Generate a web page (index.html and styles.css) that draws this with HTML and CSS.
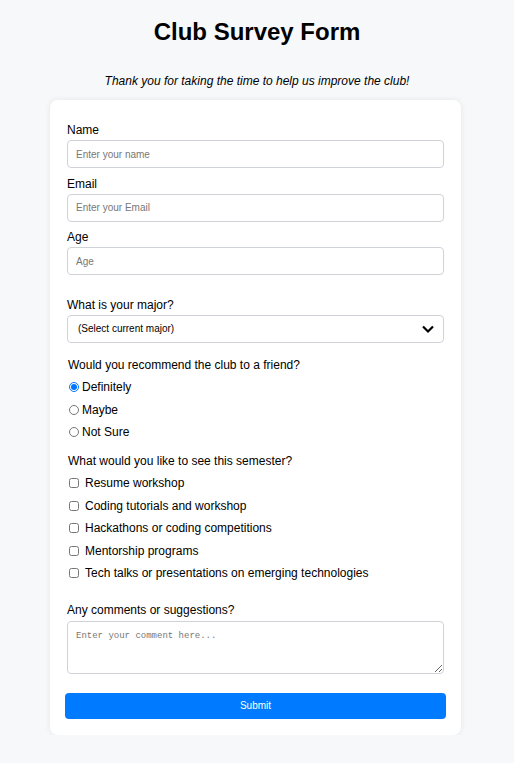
FILE: index.html
```html
<!DOCTYPE html>
<html>
<head>
<meta charset="utf-8">
<link rel="stylesheet" href="styles.css">
</head>
<body>
<h1 class="title">Club Survey Form</h1>
<p class="subtitle">Thank you for taking the time to help us improve the club!</p>
<form class="card">
  <label class="lbl" for="name">Name</label>
  <input class="field" id="name" type="text" placeholder="Enter your name">
  <label class="lbl" for="email">Email</label>
  <input class="field" id="email" type="email" placeholder="Enter your Email">
  <label class="lbl" for="age">Age</label>
  <input class="field" id="age" type="number" placeholder="Age">

  <label class="lbl lbl-major" for="major">What is your major?</label>
  <div class="select-wrap">
    <select class="field select" id="major">
      <option>(Select current major)</option>
    </select>
    <svg class="chev" width="14" height="10" viewBox="0 0 14 10"><path d="M2 2.5 L7 7.5 L12 2.5" fill="none" stroke="#000" stroke-width="2.2"/></svg>
  </div>

  <p class="q">Would you recommend the club to a friend?</p>
  <label class="opt"><input type="radio" name="rec" checked> Definitely</label>
  <label class="opt"><input type="radio" name="rec"> Maybe</label>
  <label class="opt"><input type="radio" name="rec"> Not Sure</label>

  <p class="q q2">What would you like to see this semester?</p>
  <label class="chk"><input type="checkbox"> Resume workshop</label>
  <label class="chk"><input type="checkbox"> Coding tutorials and workshop</label>
  <label class="chk"><input type="checkbox"> Hackathons or coding competitions</label>
  <label class="chk"><input type="checkbox"> Mentorship programs</label>
  <label class="chk"><input type="checkbox"> Tech talks or presentations on emerging technologies</label>

  <label class="lbl lbl-comments" for="comments">Any comments or suggestions?</label>
  <textarea class="field area" id="comments" placeholder="Enter your comment here..."></textarea>

  <button class="submit" type="button">Submit</button>
</form>
</body>
</html>
```
FILE: styles.css
```css
* { box-sizing: border-box; }
body {
  margin: 0;
  background: #f7f8fa;
  font-family: "Liberation Sans", Arial, sans-serif;
  color: #000;
}
.title {
  margin: 18px 0 0;
  text-align: center;
  font-size: 24px;
  font-weight: bold;
  line-height: 28px;
}
.subtitle {
  margin: 28px 0 0;
  text-align: center;
  font-style: italic;
  font-size: 12px;
  line-height: 14px;
}
.card {
  width: 411px;
  margin: 12px 0 0 50px;
  background: #fff;
  border-radius: 8px;
  box-shadow: 0 0 6px rgba(0,0,0,0.08);
  padding: 23px 15px 16px 17px;
  display: flex;
  flex-direction: column;
  align-items: flex-start;
}
.lbl {
  font-size: 12px;
  line-height: 14px;
  margin-bottom: 3px;
}
.field {
  width: 377px;
  height: 28px;
  border: 1px solid #cfd3d8;
  border-radius: 4px;
  padding: 0 8px;
  font-family: "Liberation Sans", Arial, sans-serif;
  font-size: 10px;
  margin: 0 0 8.5px;
  background: #fff;
  outline: none;
}
.field::placeholder { color: #777; }
.lbl-major { margin-top: 14px; }
.select-wrap { position: relative; }
.select {
  appearance: none;
  -webkit-appearance: none;
  padding-left: 10px;
  color: #000;
  font-size: 10px;
}
.chev { position: absolute; right: 9px; top: 9px; pointer-events: none; }
.q {
  margin: 7px 0 4px 1px;
  font-size: 12px;
  line-height: 14px;
}
.opt, .chk {
  display: flex;
  align-items: center;
  font-size: 12px;
  line-height: 14px;
  margin-left: 2px;
  height: 22.4px;
}
.opt input {
  margin: 0 3px 0 0;
  width: 10px;
  height: 10px;
}
.chk input {
  margin: 0 6px 0 0;
  width: 10px;
  height: 10px;
}
.q2 { margin-top: 11px; }
.lbl-comments { margin-top: 19px; margin-bottom: 4px; }
.area {
  height: 53px;
  padding: 9px 8px;
  font-family: "Liberation Mono", "DejaVu Sans Mono", monospace;
  font-size: 9px;
  resize: vertical;
}
.submit {
  margin-top: 10px;
  margin-left: -2px;
  width: 381px;
  height: 26px;
  border: none;
  border-radius: 4px;
  background: #007bff;
  color: #fff;
  font-family: "Liberation Sans", Arial, sans-serif;
  font-size: 10px;
  font-weight: normal;
}
```
